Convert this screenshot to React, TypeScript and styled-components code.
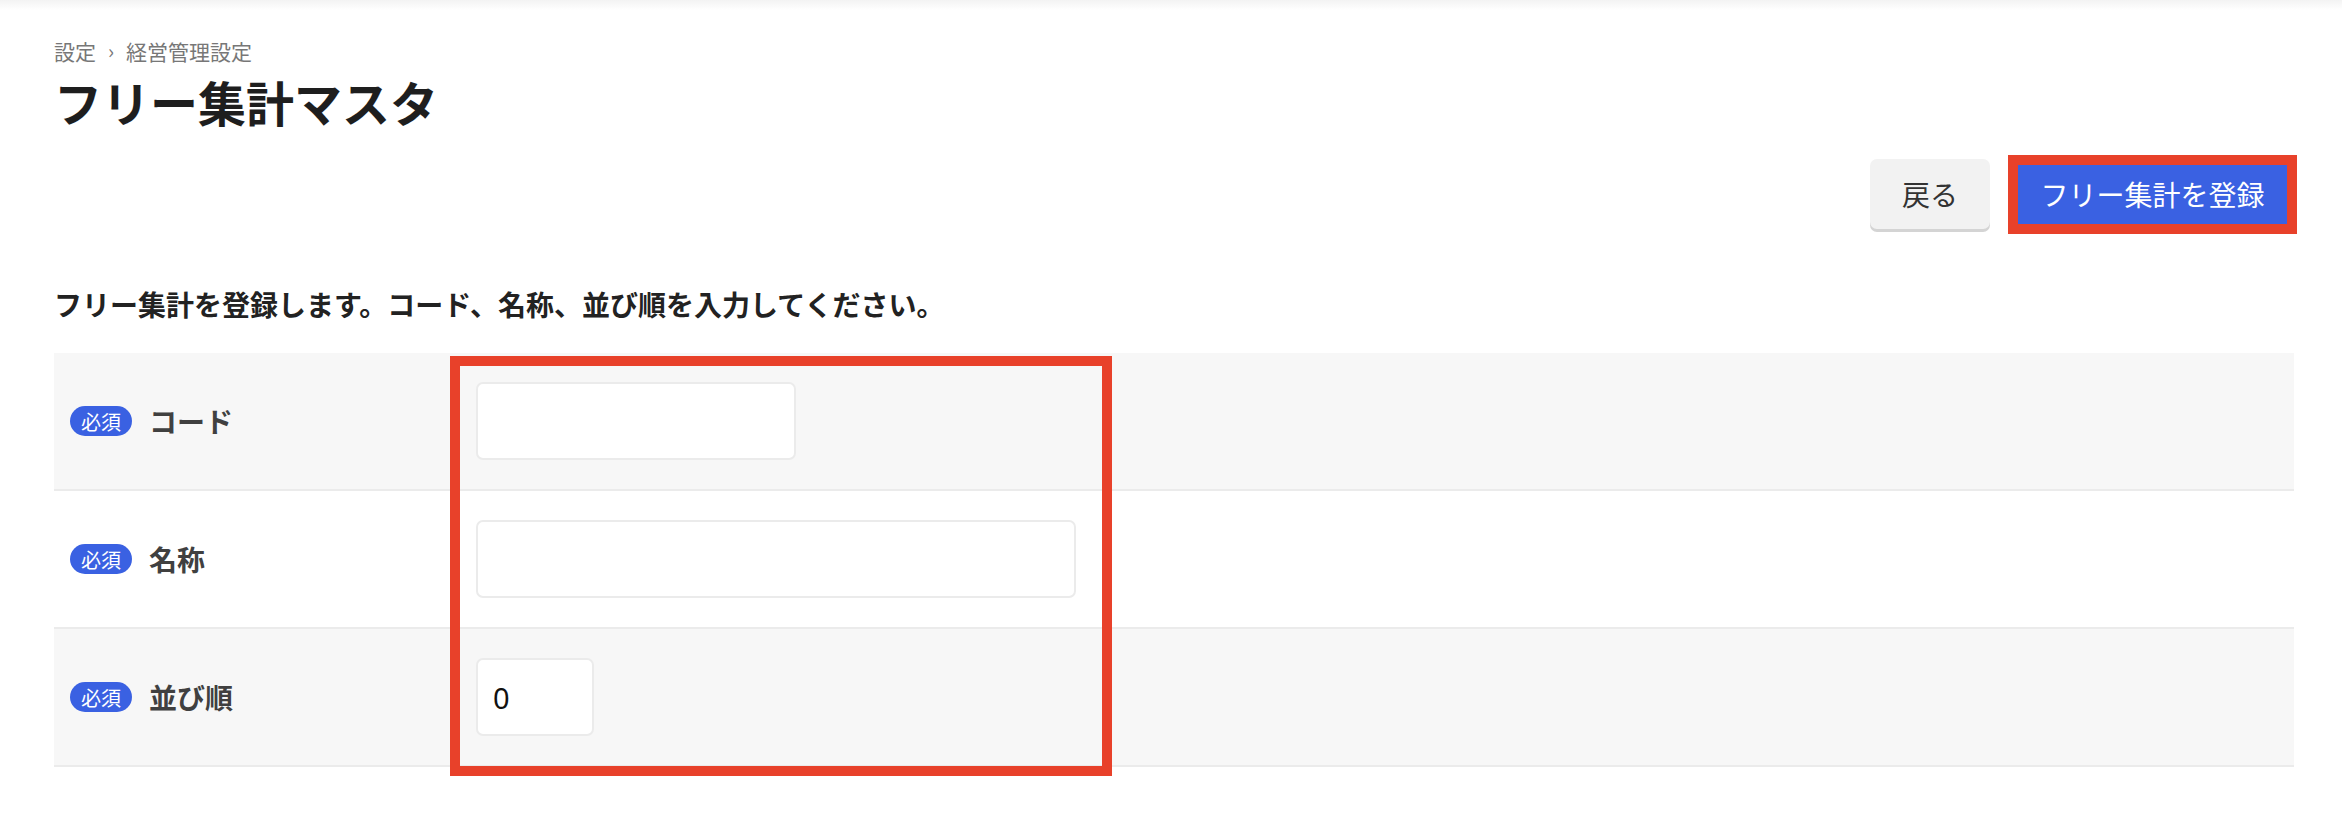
import React from 'react';
import styled, { createGlobalStyle } from 'styled-components';

const GlobalStyle = createGlobalStyle`
  html, body {
    margin: 0;
    padding: 0;
    background: #fff;
    font-family: 'Noto Sans CJK JP', 'Noto Sans', sans-serif;
    color: #222;
  }
  * {
    box-sizing: border-box;
  }
`;

const fields = [
  { label: 'コード', width: 320, value: '', striped: true },
  { label: '名称', width: 600, value: '', striped: false },
  { label: '並び順', width: 118, value: '0', striped: true },
];

const App = () => {
  return (
    <>
      <GlobalStyle />
      <TopShade />
      <Page>
        <Breadcrumb>
          <span>設定</span>
          <Sep>›</Sep>
          <span>経営管理設定</span>
        </Breadcrumb>
        <Title>フリー集計マスタ</Title>
        <ActionBar>
          <BackBtn>戻る</BackBtn>
          <SubmitBtn>フリー集計を登録</SubmitBtn>
        </ActionBar>
        <Description>フリー集計を登録します。コード、名称、並び順を入力してください。</Description>
        <FormTable>
          {fields.map((f) => (
            <Row key={f.label} striped={f.striped}>
              <LabelCell>
                <Required>必須</Required>
                <Label>{f.label}</Label>
              </LabelCell>
              <InputCell>
                <TextInput style={{ width: f.width }} defaultValue={f.value} />
              </InputCell>
            </Row>
          ))}
          <Highlight />
        </FormTable>
      </Page>
    </>
  );
};

export default App;

const TopShade = styled.div`
  height: 10px;
  background: linear-gradient(#f3f3f3, #fff);
`;

const Page = styled.div`
  padding: 0 48px 40px 54px;
`;

const Breadcrumb = styled.div`
  margin-top: 27px;

  display: flex;
  align-items: center;

  font-size: 21px;
  line-height: 28px;
  color: #777;
`;

const Sep = styled.span`
  margin: 0 12px;
  font-size: 20px;
`;

const Title = styled.h1`
  margin: 4px 0 0;

  font-size: 48px;
  line-height: 64px;
  font-weight: 700;
  color: #1e1e1e;
`;

const ActionBar = styled.div`
  margin-top: 26px;
  padding-right: 7px;

  display: flex;
  justify-content: flex-end;
  align-items: center;
  gap: 28px;
`;

const BackBtn = styled.button`
  width: 120px;
  height: 70px;

  border: none;
  border-radius: 7px;
  background: #f2f2f2;
  box-shadow: 0 3px 0 #d4d4d4;

  font-family: inherit;
  font-size: 28px;
  color: #333;
  cursor: pointer;
`;

const SubmitBtn = styled.button`
  width: 269px;
  height: 59px;

  border: none;
  background: #3a61e2;
  outline: 10px solid #e8412a;

  font-family: inherit;
  font-size: 28px;
  color: #fff;
  cursor: pointer;
`;

const Description = styled.p`
  margin: 55px 0 0;

  font-size: 28px;
  line-height: 40px;
  font-weight: 700;
  color: #222;
`;

const FormTable = styled.div`
  position: relative;
  margin-top: 29px;
`;

const Row = styled.div<{ striped: boolean }>`
  height: 138px;

  display: flex;
  align-items: center;

  background: ${({ striped }) => (striped ? '#f7f7f7' : '#fff')};
  border-bottom: 2px solid #ebebeb;
`;

const LabelCell = styled.div`
  width: 422px;
  padding-left: 16px;

  display: flex;
  align-items: center;
  gap: 17px;
`;

const Required = styled.span`
  height: 30px;
  padding: 0 11px;

  display: inline-flex;
  align-items: center;

  border-radius: 15px;
  background: #3a61e2;

  font-size: 20px;
  color: #fff;
`;

const Label = styled.span`
  font-size: 28px;
  font-weight: 700;
  color: #404040;
`;

const InputCell = styled.div`
  display: flex;
  align-items: center;
`;

const TextInput = styled.input`
  height: 78px;
  padding: 0 15px;

  border: 2px solid #ebebeb;
  border-radius: 7px;
  background: #fff;

  font-family: 'Noto Sans', sans-serif;
  font-size: 29px;
  color: #111;
  outline: none;
`;

const Highlight = styled.div`
  position: absolute;
  top: 3px;
  left: 396px;

  width: 662px;
  height: 420px;

  border: 10px solid #e8412a;
  pointer-events: none;
`;
